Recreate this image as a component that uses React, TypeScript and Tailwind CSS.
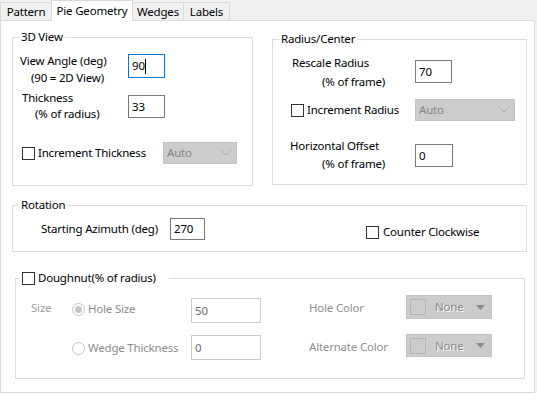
import React from 'react'

const GROUP_BORDER = 'border-[#dcdcdc]'

function CheckBox() {
  return <span className="inline-block w-[13px] h-[13px] border border-[#333333] bg-white shrink-0" />
}

function Radio({ checked }: { checked?: boolean }) {
  return (
    <span className="flex items-center justify-center w-[13px] h-[13px] rounded-full border border-[#c4c4c4] bg-white shrink-0">
      {checked && <span className="w-[7px] h-[7px] rounded-full bg-[#c4c4c4]" />}
    </span>
  )
}

function TextBox({ value, w, h, focused, disabled }: { value: string; w: string; h: string; focused?: boolean; disabled?: boolean }) {
  const border = focused ? 'border-[#0078d7]' : disabled ? 'border-[#cccccc]' : 'border-[#7a7a7a]'
  return (
    <div className={`${w} ${h} border ${border} bg-white flex items-center pl-[3px] shrink-0 ${disabled ? 'text-[#6d6d6d]' : 'text-black'}`}>
      <span>{value}</span>
      {focused && <span className="inline-block w-px h-[15px] bg-black" />}
    </div>
  )
}

function AutoCombo({ w }: { w: string }) {
  return (
    <div className={`${w} h-[22px] border border-[#c3c3c3] bg-[#cccccc] flex items-center justify-between pl-[3px] pr-[5px] text-[#838383] shrink-0`}>
      <span>Auto</span>
      <svg width="10" height="6" viewBox="0 0 10 6">
        <polyline points="0.5,0.5 5,5 9.5,0.5" fill="none" stroke="#a8a8a8" strokeWidth="1" />
      </svg>
    </div>
  )
}

function ColorCombo({ h }: { h: string }) {
  return (
    <div className={`w-[86px] ${h} border border-[#c3c3c3] bg-[#cccccc] flex items-center pl-[3px] pr-[6px] shrink-0`}>
      <span className="w-[16px] h-[16px] border border-[#b4b4b4] bg-[#cccccc] shrink-0" />
      <span className="ml-[9px] text-[#8a8a8a] [text-shadow:1px_1px_0_#ffffff]">None</span>
      <svg className="ml-auto" width="9" height="5" viewBox="0 0 9 5">
        <polygon points="0,0 9,0 4.5,5" fill="#8c8c8c" />
      </svg>
    </div>
  )
}

function Legend({ children, className = '' }: { children: React.ReactNode; className?: string }) {
  return <legend className={`ml-[6px] px-[2px] leading-[16px] ${className}`}>{children}</legend>
}

export default function App() {
  return (
    <div className="w-[537px] h-[393px] bg-[#f0f0f0] text-[11.5px] tracking-[-0.2px] text-black leading-[16px] overflow-hidden" style={{ fontFamily: '"Noto Sans", sans-serif' }}>
      {/* tab strip */}
      <div className="flex items-end h-[20px]">
        <div className="w-[51px] h-[18px] border-l border-t border-[#d9d9d9] bg-[#f0f0f0] flex items-center justify-center pt-[1px]">Pattern</div>
        <div className="w-[82px] h-[21px] border border-b-0 border-[#d9d9d9] bg-white flex items-start justify-center pt-[2px] -mb-px relative z-10">Pie Geometry</div>
        <div className="w-[51px] h-[18px] border-r border-t border-[#d9d9d9] bg-[#f0f0f0] flex items-center justify-center pt-[1px]">Wedges</div>
        <div className="w-[46px] h-[18px] border-r border-t border-[#d9d9d9] bg-[#f0f0f0] flex items-center justify-center pt-[1px]">Labels</div>
      </div>

      {/* tab panel */}
      <div className="w-[535px] h-[373px] border border-[#d9d9d9] bg-white pl-[11px] flex flex-col">
        <div className="flex mt-[8px]">
          {/* 3D View */}
          <fieldset className={`w-[241px] h-[157px] border ${GROUP_BORDER}`}>
            <Legend>3D View</Legend>
            <div className="flex mt-[7px] pl-[7px]">
              <div className="w-[108px] leading-[17px]">
                <div>View Angle (deg)</div>
                <div className="pl-[11px]">(90 = 2D View)</div>
              </div>
              <div className="mt-[2px]">
                <TextBox value="90" w="w-[37px]" h="h-[24px]" focused />
              </div>
            </div>
            <div className="flex mt-[4px] pl-[9px]">
              <div className="w-[106px]">
                <div>Thickness</div>
                <div className="pl-[13px]">(% of radius)</div>
              </div>
              <div className="mt-[5px]">
                <TextBox value="33" w="w-[37px]" h="h-[23px]" />
              </div>
            </div>
            <div className="flex items-center mt-[20px] pl-[9px]">
              <CheckBox />
              <span className="ml-[3px] w-[125px]">Increment Thickness</span>
              <AutoCombo w="w-[74px]" />
            </div>
          </fieldset>

          {/* Radius/Center */}
          <fieldset className={`ml-[19px] mt-[2px] w-[255px] h-[154px] border ${GROUP_BORDER}`}>
            <Legend>Radius/Center</Legend>
            <div className="flex mt-[6px] pl-[19px]">
              <div className="w-[123px] leading-[19px]">
                <div>Rescale Radius</div>
                <div className="pl-[30px]">(% of frame)</div>
              </div>
              <div className="mt-[7px]">
                <TextBox value="70" w="w-[37px]" h="h-[23px]" />
              </div>
            </div>
            <div className="flex items-center mt-[8px] pl-[18px]">
              <CheckBox />
              <span className="ml-[3px] w-[108px]">Increment Radius</span>
              <AutoCombo w="w-[100px]" />
            </div>
            <div className="flex mt-[16px] pl-[17px]">
              <div className="w-[125px] leading-[18px]">
                <div>Horizontal Offset</div>
                <div className="pl-[32px]">(% of frame)</div>
              </div>
              <div className="mt-[7px]">
                <TextBox value="0" w="w-[38px]" h="h-[23px]" />
              </div>
            </div>
          </fieldset>
        </div>

        {/* Rotation */}
        <fieldset className={`mt-[11px] w-[515px] h-[55px] border ${GROUP_BORDER}`}>
          <Legend>Rotation</Legend>
          <div className="flex items-start mt-[5px] pl-[28px]">
            <span className="w-[129px] leading-[22px]">Starting Azimuth (deg)</span>
            <TextBox value="270" w="w-[35px]" h="h-[22px]" />
            <div className="ml-[161px] mt-[3px] h-[22px] flex items-center">
              <CheckBox />
              <span className="ml-[4px]">Counter Clockwise</span>
            </div>
          </div>
        </fieldset>

        {/* Doughnut */}
        <fieldset className={`mt-[18px] ml-[3px] w-[510px] h-[109px] border ${GROUP_BORDER}`}>
          <legend className="ml-[3px] pl-[3px] pr-[13px] leading-[16px] flex items-center">
            <CheckBox />
            <span className="ml-[3px]">Doughnut(% of radius)</span>
          </legend>
          <div className="flex items-start mt-[9px] pl-[15px]">
            <span className="w-[41px] mt-[5px] text-[#a0a0a0]">Size</span>
            <div className="w-[119px] mt-[6px] flex items-center">
              <Radio checked />
              <span className="ml-[3px] text-[#8d8d8d]">Hole Size</span>
            </div>
            <div className="mt-[3px]">
              <TextBox value="50" w="w-[70px]" h="h-[25px]" disabled />
            </div>
            <span className="ml-[48px] w-[97px] mt-[5px] text-[#8f8f8f]">Hole Color</span>
            <ColorCombo h="h-[24px]" />
          </div>
          <div className="flex items-start mt-[11px] pl-[56px]">
            <div className="w-[119px] mt-[6px] flex items-center">
              <Radio />
              <span className="ml-[3px] text-[#8d8d8d]">Wedge Thickness</span>
            </div>
            <div className="mt-[1px]">
              <TextBox value="0" w="w-[70px]" h="h-[25px]" disabled />
            </div>
            <span className="ml-[48px] w-[97px] mt-[5px] text-[#8f8f8f]">Alternate Color</span>
            <ColorCombo h="h-[23px]" />
          </div>
        </fieldset>
      </div>
    </div>
  )
}
